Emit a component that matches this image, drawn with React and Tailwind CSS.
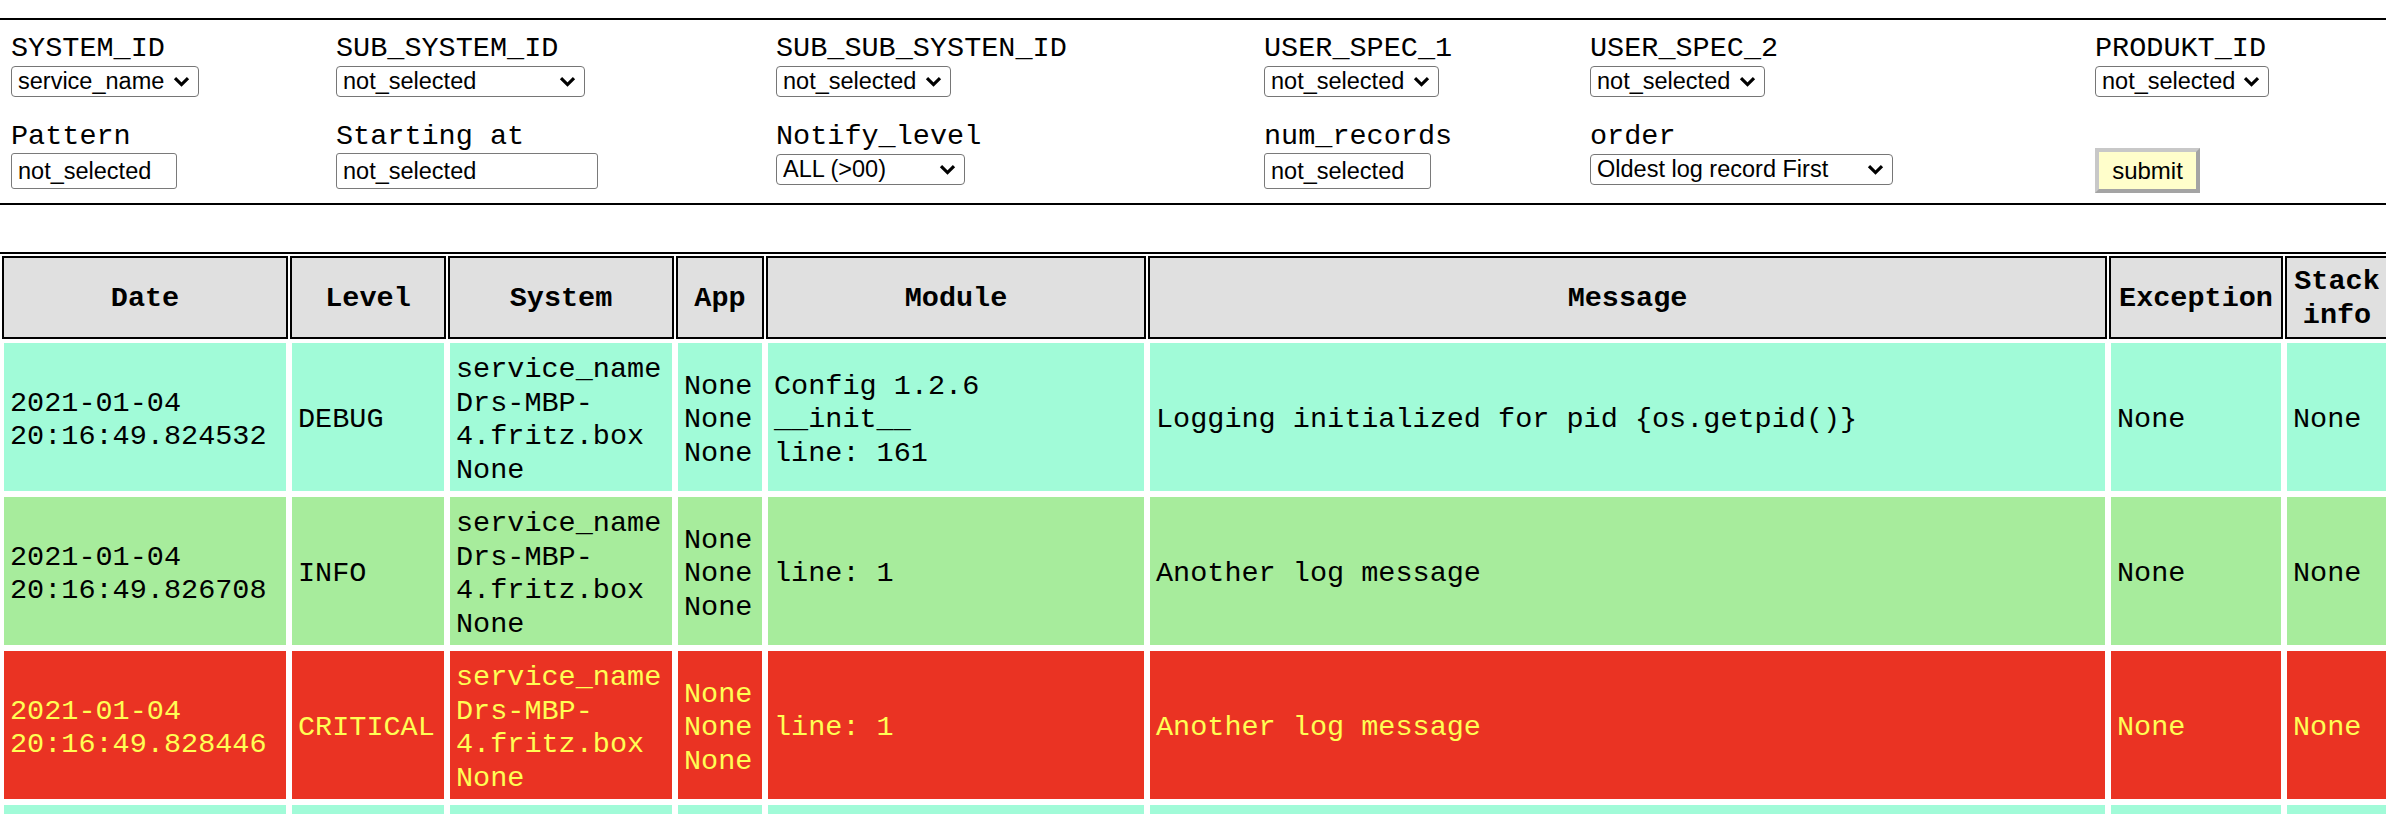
import React from 'react';

const rows = [
  {
    bg: 'bg-[#a1fbd8]',
    fg: 'text-black',
    date: ['2021-01-04', '20:16:49.824532'],
    level: 'DEBUG',
    module: ['Config 1.2.6', '__init__', 'line: 161'],
    message: 'Logging initialized for pid {os.getpid()}',
  },
  {
    bg: 'bg-[#a7ec9c]',
    fg: 'text-black',
    date: ['2021-01-04', '20:16:49.826708'],
    level: 'INFO',
    module: ['line: 1'],
    message: 'Another log message',
  },
  {
    bg: 'bg-[#ea3323]',
    fg: 'text-[#fffe54]',
    date: ['2021-01-04', '20:16:49.828446'],
    level: 'CRITICAL',
    module: ['line: 1'],
    message: 'Another log message',
  },
  {
    bg: 'bg-[#a1fbd8]',
    fg: 'text-black',
    date: ['2021-01-04', '20:16:49.830112'],
    level: 'DEBUG',
    module: ['line: 1'],
    message: 'Another log message',
  },
];

const Chevron = () => (
  <svg
    className="pointer-events-none absolute right-[9px] top-[11px]"
    width="17"
    height="11"
    viewBox="0 0 17 11"
  >
    <path d="M2 2.2 L8.5 8.6 L15 2.2" fill="none" stroke="#000" strokeWidth="3.2" />
  </svg>
);

const Select = ({ value, width }) => (
  <div className={`relative h-[31px] ${width}`}>
    <select
      defaultValue={value}
      className="h-full w-full appearance-none rounded-[4px] border border-[#767676] bg-white pl-[6px] pr-[28px] font-['Liberation_Sans',Arial,sans-serif] text-[23.5px] leading-none text-black"
    >
      <option>{value}</option>
    </select>
    <Chevron />
  </div>
);

const Input = ({ width }) => (
  <input
    type="text"
    readOnly
    value="not_selected"
    className={`h-[36px] ${width} rounded-[3px] border border-[#7a7a7a] bg-white px-[6px] font-['Liberation_Sans',Arial,sans-serif] text-[23.5px] text-black`}
  />
);

const Field = ({ label, children }) => (
  <div className="flex flex-col gap-[1px]">
    <label className="h-[34px] pt-[3px] leading-[31px]">{label}</label>
    {children}
  </div>
);

const Lines = ({ items }) => items.map((t, i) => <div key={i}>{t}</div>);

const LogTable = () => (
  <table className="mt-[47px] w-[2391px] table-fixed border-separate border-spacing-[2px] border-t-2 border-black">
    <thead>
      <tr className="bg-[#e0e0e0] font-bold">
        <th className="w-[286px] border-2 border-black px-[6px] pt-[7px] pb-[5px]">Date</th>
        <th className="w-[156px] border-2 border-black px-[6px] pt-[7px] pb-[5px]">Level</th>
        <th className="w-[226px] border-2 border-black px-[6px] pt-[7px] pb-[5px]">System</th>
        <th className="w-[88px] border-2 border-black px-[6px] pt-[7px] pb-[5px]">App</th>
        <th className="w-[380px] border-2 border-black px-[6px] pt-[7px] pb-[5px]">Module</th>
        <th className="w-[959px] border-2 border-black px-[6px] pt-[7px] pb-[5px]">Message</th>
        <th className="w-[174px] border-2 border-black px-[6px] pt-[7px] pb-[5px]">Exception</th>
        <th className="w-[104px] border-2 border-black px-[6px] pt-[7px] pb-[5px]">Stack info</th>
      </tr>
    </thead>
    <tbody>
      {rows.map((r, i) => (
        <tr key={i} className={`${r.bg} ${r.fg} whitespace-nowrap`}>
          <td className="border-2 border-white px-[6px] pt-[10px] pb-[4px] align-middle"><Lines items={r.date} /></td>
          <td className="border-2 border-white px-[6px] pt-[10px] pb-[4px] align-middle">{r.level}</td>
          <td className="border-2 border-white px-[6px] pt-[10px] pb-[4px] align-middle">
            <Lines items={['service_name', 'Drs-MBP-', '4.fritz.box', 'None']} />
          </td>
          <td className="border-2 border-white px-[6px] pt-[10px] pb-[4px] align-middle"><Lines items={['None', 'None', 'None']} /></td>
          <td className="border-2 border-white px-[6px] pt-[10px] pb-[4px] align-middle"><Lines items={r.module} /></td>
          <td className="border-2 border-white px-[6px] pt-[10px] pb-[4px] align-middle">{r.message}</td>
          <td className="border-2 border-white px-[6px] pt-[10px] pb-[4px] align-middle">None</td>
          <td className="border-2 border-white px-[6px] pt-[10px] pb-[4px] align-middle">None</td>
        </tr>
      ))}
    </tbody>
  </table>
);

export default function App() {
  return (
    <div className="h-[814px] w-full overflow-hidden bg-white pt-[18px] font-['Liberation_Mono','Courier_New',monospace] text-[28.5px] leading-[33.5px] text-black">
      <form
        className="grid grid-cols-[325px_440px_488px_326px_505px_1fr] grid-rows-[66px_71px] gap-y-[22px] border-y-2 border-black pb-[14px] pl-[11px] pt-[10px]"
        onSubmit={(e) => e.preventDefault()}
      >
        <Field label="SYSTEM_ID"><Select value="service_name" width="w-[188px]" /></Field>
        <Field label="SUB_SYSTEM_ID"><Select value="not_selected" width="w-[249px]" /></Field>
        <Field label="SUB_SUB_SYSTEN_ID"><Select value="not_selected" width="w-[175px]" /></Field>
        <Field label="USER_SPEC_1"><Select value="not_selected" width="w-[175px]" /></Field>
        <Field label="USER_SPEC_2"><Select value="not_selected" width="w-[175px]" /></Field>
        <Field label="PRODUKT_ID"><Select value="not_selected" width="w-[174px]" /></Field>

        <Field label="Pattern"><Input width="w-[166px]" /></Field>
        <Field label="Starting at"><Input width="w-[262px]" /></Field>
        <Field label="Notify_level"><Select value="ALL (>00)" width="w-[189px]" /></Field>
        <Field label="num_records"><Input width="w-[167px]" /></Field>
        <Field label="order"><Select value="Oldest log record First" width="w-[303px]" /></Field>
        <div>
          <button
            type="submit"
            className="mt-[30px] h-[45px] w-[105px] border-[4px] border-t-[#c8c8c8] border-l-[#c8c8c8] border-b-[#a4a4a4] border-r-[#a4a4a4] bg-[#fffecb] font-['Liberation_Sans',Arial,sans-serif] text-[24px] leading-none text-black"
          >
            submit
          </button>
        </div>
      </form>
      <LogTable />
    </div>
  );
}
